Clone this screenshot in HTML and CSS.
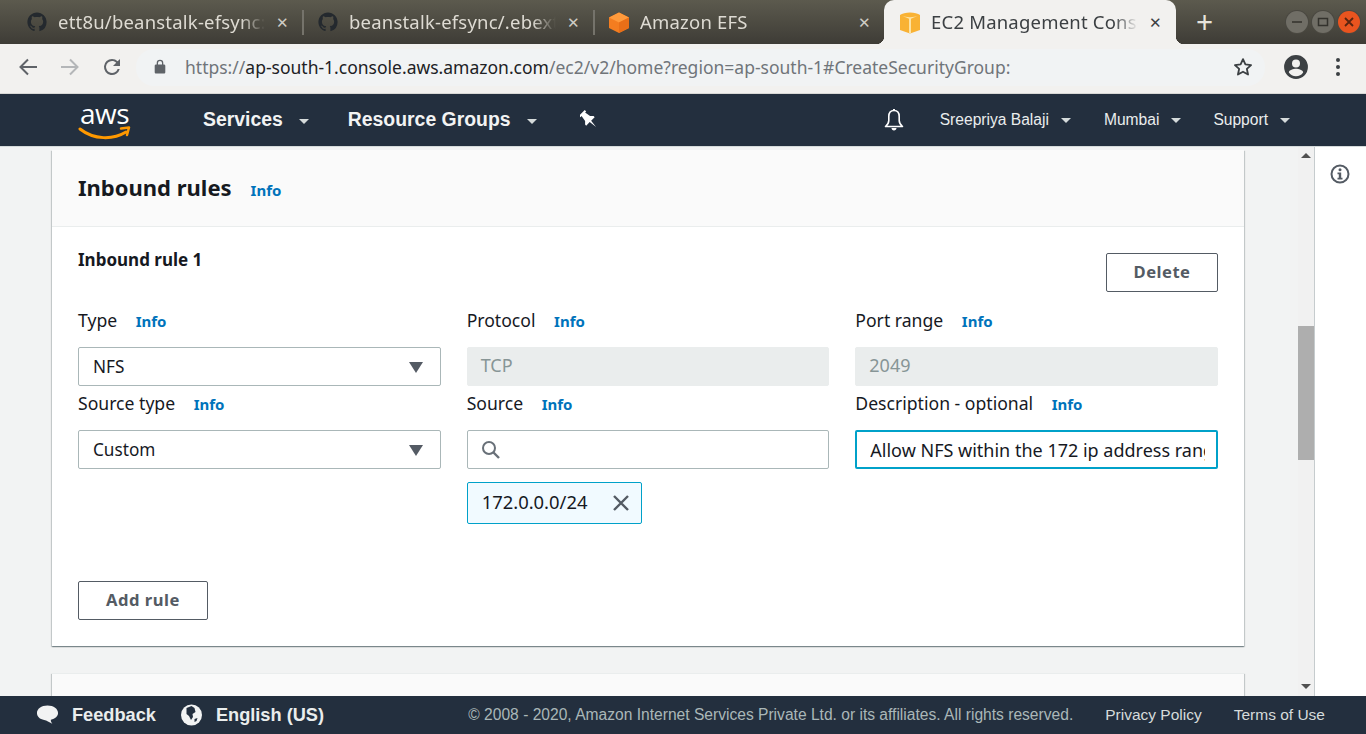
FILE: index.html
```html
<!DOCTYPE html>
<html lang="en">
<head>
  <meta charset="UTF-8">
  <title>EC2 Management Console</title>
  <link rel="stylesheet" href="styles.css">
</head>
<body>
  <div class="tabstrip">
    <div class="tab">
      <svg class="tab-icon" viewBox="-1 -2 18 20"><path fill="#24292e" d="M8 0C3.58 0 0 3.58 0 8c0 3.54 2.29 6.53 5.47 7.59.4.07.55-.17.55-.38 0-.19-.01-.82-.01-1.49-2.01.37-2.53-.49-2.69-.94-.09-.23-.48-.94-.82-1.13-.28-.15-.68-.52-.01-.53.63-.01 1.08.58 1.23.82.72 1.21 1.87.87 2.33.66.07-.52.28-.87.51-1.07-1.78-.2-3.64-.89-3.64-3.95 0-.87.31-1.59.82-2.15-.08-.2-.36-1.02.08-2.12 0 0 .67-.21 2.2.82.64-.18 1.32-.27 2-.27s1.36.09 2 .27c1.53-1.04 2.2-.82 2.2-.82.44 1.1.16 1.92.08 2.12.51.56.82 1.27.82 2.15 0 3.07-1.87 3.75-3.65 3.95.29.25.54.73.54 1.48 0 1.07-.01 1.93-.01 2.2 0 .21.15.46.55.38A8.01 8.01 0 0 0 16 8c0-4.42-3.58-8-8-8z"/></svg>
      <span class="tab-title">ett8u/beanstalk-efsync: Demo</span>
      <span class="tab-close">✕</span>
    </div>
    <div class="tab">
      <svg class="tab-icon" viewBox="-1 -2 18 20"><path fill="#24292e" d="M8 0C3.58 0 0 3.58 0 8c0 3.54 2.29 6.53 5.47 7.59.4.07.55-.17.55-.38 0-.19-.01-.82-.01-1.49-2.01.37-2.53-.49-2.69-.94-.09-.23-.48-.94-.82-1.13-.28-.15-.68-.52-.01-.53.63-.01 1.08.58 1.23.82.72 1.21 1.87.87 2.33.66.07-.52.28-.87.51-1.07-1.78-.2-3.64-.89-3.64-3.95 0-.87.31-1.59.82-2.15-.08-.2-.36-1.02.08-2.12 0 0 .67-.21 2.2.82.64-.18 1.32-.27 2-.27s1.36.09 2 .27c1.53-1.04 2.2-.82 2.2-.82.44 1.1.16 1.92.08 2.12.51.56.82 1.27.82 2.15 0 3.07-1.87 3.75-3.65 3.95.29.25.54.73.54 1.48 0 1.07-.01 1.93-.01 2.2 0 .21.15.46.55.38A8.01 8.01 0 0 0 16 8c0-4.42-3.58-8-8-8z"/></svg>
      <span class="tab-title">beanstalk-efsync/.ebextensions</span>
      <span class="tab-close">✕</span>
    </div>
    <div class="tab tab-last">
      <svg class="tab-icon" viewBox="0 0 22 24"><path fill="#f47d20" d="M11 2.500l10 5v10.500l-10 5-10-5V7.500z"/><path fill="#ff9a3c" d="M11 2.500l10 5-10 5-10-5z"/><path fill="#e96f18" d="M11 12.500l10-5V18l-10 5z"/></svg>
      <span class="tab-title">Amazon EFS</span>
      <span class="tab-close">✕</span>
    </div>
    <div class="tab tab-active">
      <svg class="tab-icon" viewBox="0 0 22 24"><path fill="#f9b234" d="M1 5C5 1.500 17 1.500 21 5v15l-10 3.500L1 20z"/><path fill="#fde3a4" d="M3 5.800c4 1.800 12 1.800 16 0l-7 3V23.200h-2V8.800z"/></svg>
      <span class="tab-title">EC2 Management Console</span>
      <span class="tab-close">✕</span>
    </div>
    <span class="new-tab">+</span>
    <div class="window-btns">
      <span class="win-btn"><svg viewBox="0 0 22 22"><path stroke="#33322d" stroke-width="1.500" d="M6 11h10"/></svg></span>
      <span class="win-btn"><svg viewBox="0 0 22 22"><path fill="none" stroke="#33322d" stroke-width="1.500" d="M6.500 7.500h9v7h-9z"/></svg></span>
      <span class="win-btn win-close"><svg viewBox="0 0 22 22"><path fill="none" stroke="#5a2410" stroke-width="1.800" d="M7 7l8 8M15 7l-8 8"/></svg></span>
    </div>
  </div>

  <div class="toolbar">
    <svg class="tool-icon" viewBox="0 0 24 24"><path fill="none" stroke="#5f6368" stroke-width="2" d="M21 12H5M12 4.500L4.500 12l7.500 7.500"/></svg>
    <svg class="tool-icon" viewBox="0 0 24 24"><path fill="none" stroke="#b4b6b8" stroke-width="2" d="M3 12h16M12 4.500l7.500 7.500-7.500 7.500"/></svg>
    <svg class="tool-icon" viewBox="0 0 24 24"><path fill="#5f6368" d="M17.650 6.350A7.960 7.960 0 0 0 12 4a8 8 0 1 0 7.730 10h-2.080A6 6 0 1 1 12 6c1.660 0 3.140.69 4.220 1.780L13 11h7V4z"/></svg>
    <div class="omnibox">
      <svg class="lock" viewBox="0 0 12 16"><path fill="#5f6368" d="M10 5.500H9.300V4a3.300 3.300 0 0 0-6.600 0v1.500H2c-.7 0-1.300.6-1.300 1.300v6.400c0 .7.6 1.300 1.300 1.300h8c.7 0 1.300-.6 1.300-1.300V6.800c0-.7-.6-1.300-1.300-1.300zM4 4a2 2 0 0 1 4 0v1.500H4z"/></svg>
      <span class="url">https://<b>ap-south-1.console.aws.amazon.com</b>/ec2/v2/home?region=ap-south-1#CreateSecurityGroup:</span>
      <svg class="star" viewBox="0 0 24 24"><path fill="none" stroke="#3c4043" stroke-width="2" stroke-linejoin="round" d="M12 3.500l2.600 5.700 6.200.7-4.600 4.200 1.300 6.100-5.500-3.100-5.500 3.100 1.300-6.100-4.600-4.200 6.200-.7z"/></svg>
    </div>
    <svg class="avatar" viewBox="0 0 24 24"><path fill="#3c4043" d="M12 1a11 11 0 1 0 0 22 11 11 0 0 0 0-22zm0 4a3.700 3.700 0 1 1 0 7.400A3.700 3.700 0 0 1 12 5zm0 15.500c-2.800 0-5.200-1.400-6.600-3.500 0-2.200 4.400-3.400 6.600-3.400s6.600 1.200 6.600 3.400a8 8 0 0 1-6.600 3.500z"/></svg>
    <div class="kebab"><i></i><i></i><i></i></div>
  </div>

  <nav class="navbar">
    <div class="aws-logo">
      <span class="aws-word">aws</span>
      <svg class="aws-smile" viewBox="0 0 54 14"><path fill="none" stroke="#f90" stroke-width="3" stroke-linecap="round" d="M2 3c14 11 33 11 46 3"/><path fill="none" stroke="#f90" stroke-width="2.500" stroke-linecap="round" stroke-linejoin="round" d="M43 2.500l8-1-2 7.500"/></svg>
    </div>
    <span class="nav-main">Services<i class="caret"></i></span>
    <span class="nav-main">Resource Groups<i class="caret"></i></span>
    <svg class="pin" viewBox="0 0 18 20"><g transform="rotate(-45 9 10) translate(3 0)"><path fill="#fff" d="M2 0h8v2H8.500l1 6 2.500 2.500V12H7l-1 8-1-8H0v-1.500L2.500 8l1-6H2z"/></g></svg>
    <svg class="bell" viewBox="0 0 22 24"><path fill="none" stroke="#fff" stroke-width="1.600" stroke-linejoin="round" d="M11 2.500c-3.500 0-5.200 2.800-5.200 6v4c0 2.500-1.500 4.500-3.300 6h17c-1.800-1.500-3.300-3.500-3.300-6v-4c0-3.200-1.700-6-5.200-6z"/><path fill="#fff" d="M8.500 20h5c0 1.400-1.100 2.400-2.500 2.400S8.500 21.400 8.500 20zM10 1h2v2h-2z"/></svg>
    <span class="nav-sub nav-user">Sreepriya Balaji<i class="caret"></i></span>
    <span class="nav-sub">Mumbai<i class="caret"></i></span>
    <span class="nav-sub nav-last">Support<i class="caret"></i></span>
  </nav>

  <div class="workspace">
    <main class="content">
      <section class="card">
        <header class="card-head">
          <h2>Inbound rules</h2>
          <a class="info">Info</a>
        </header>
        <div class="card-body">
          <div class="rule-head">
            <h3>Inbound rule 1</h3>
            <button class="btn btn-delete">Delete</button>
          </div>
          <div class="rule-grid">
            <div class="field">
              <div class="field-label">Type <a class="info">Info</a></div>
              <div class="select">NFS<i class="select-arrow"></i></div>
            </div>
            <div class="field">
              <div class="field-label">Protocol <a class="info">Info</a></div>
              <div class="readonly">TCP</div>
            </div>
            <div class="field">
              <div class="field-label">Port range <a class="info">Info</a></div>
              <div class="readonly">2049</div>
            </div>
            <div class="field">
              <div class="field-label">Source type <a class="info">Info</a></div>
              <div class="select">Custom<i class="select-arrow"></i></div>
            </div>
            <div class="field">
              <div class="field-label">Source <a class="info">Info</a></div>
              <div class="search">
                <svg class="search-icon" viewBox="0 0 20 20"><circle cx="8" cy="8" r="6" fill="none" stroke="#687078" stroke-width="2"/><path stroke="#687078" stroke-width="2.400" d="M12.500 12.500l5.500 5.500"/></svg>
              </div>
              <div class="token"><span class="token-text">172.0.0.0/24</span>
                <svg class="token-x" viewBox="0 0 18 18"><path stroke="#545b64" stroke-width="2.400" fill="none" d="M2 2l14 14M16 2L2 16"/></svg>
              </div>
            </div>
            <div class="field">
              <div class="field-label">Description - optional <a class="info">Info</a></div>
              <input class="text-input" type="text" value="Allow NFS within the 172 ip address range" readonly>
            </div>
          </div>
          <button class="btn btn-add">Add rule</button>
        </div>
      </section>
      <section class="card card-next">
        <div class="card-head card-head-next"></div>
      </section>
    </main>
    <div class="scrollbar">
      <i class="arrow-up"></i>
      <div class="thumb"></div>
      <i class="arrow-down"></i>
    </div>
    <aside class="sidebar">
      <svg class="side-info" viewBox="0 0 20 20"><circle cx="10" cy="10" r="8.500" fill="none" stroke="#545b64" stroke-width="2"/><circle cx="10" cy="5.800" r="1.500" fill="#545b64"/><path fill="#545b64" d="M7.500 8.500h3.700v5.300h1.300v1.700h-5v-1.700h1.300v-3.600H7.500z"/></svg>
    </aside>
  </div>

  <footer class="footer">
    <svg class="foot-icon" viewBox="0 0 24 22"><path fill="#f2f3f3" d="M12 1C5.500 1 1 4.500 1 9c0 3.800 3 6.500 7.500 7.300 2.800.5 5 2.500 8.500 3.700-1.300-1.500-1.700-2.900-1.500-4C20 15 23 12.500 23 9c0-4.500-4.500-8-11-8z"/></svg>
    <span class="foot-strong">Feedback</span>
    <svg class="foot-icon foot-globe" viewBox="0 0 22 22"><circle cx="11" cy="11" r="10.500" fill="#f2f3f3"/><path fill="#232f3e" d="M6 4l5-2 3 2 1 4-3 2 .5 3-2 3-2-4-2.500-2zM14 15l3-1-1 3-2 1z"/></svg>
    <span class="foot-strong">English (US)</span>
    <span class="copyright">© 2008 - 2020, Amazon Internet Services Private Ltd. or its affiliates. All rights reserved.</span>
    <a class="foot-link">Privacy Policy</a>
    <a class="foot-link">Terms of Use</a>
  </footer>
</body>
</html>
```

FILE: styles.css
```css
* {
  box-sizing: border-box;
}
html, body {
  height: 100%;
}
body {
  margin: 0;
  display: flex;
  flex-direction: column;
  overflow: hidden;
  font-family: "Noto Sans", sans-serif;
  color: #16191f;
  background: #f2f3f3;
}

/* browser tabs */
.tabstrip {
  height: 44px;
  flex: none;
  display: flex;
  align-items: center;
  padding-left: 12px;
  color: #dedbd3;
  background: linear-gradient(#5c5a4e, #3e3c36);
}
.tab {
  width: 291px;
  height: 44px;
  flex: none;
  display: flex;
  align-items: center;
  gap: 10px;
  padding: 0 14px;
  position: relative;
}
.tab::after {
  content: "";
  position: absolute;
  right: -1px;
  top: 10px;
  width: 2px;
  height: 25px;
  background: #75736b;
}
.tab-last::after {
  display: none;
}
.tab-icon {
  width: 22px;
  height: 24px;
  flex: none;
}
.tab-title {
  flex: 1;
  min-width: 0;
  overflow: hidden;
  white-space: nowrap;
  font-size: 18.500px;
  letter-spacing: .2px;
  padding-bottom: 2px;
  -webkit-mask-image: linear-gradient(to left, transparent, #000 24px);
  mask-image: linear-gradient(to left, transparent, #000 24px);
}
.tab-close {
  font-size: 15px;
  width: 14px;
  text-align: center;
  color: #cfccc5;
}
.tab-active {
  color: #3c4043;
  background: #f2f1ef;
  border-radius: 10px 10px 0 0;
  width: 292px;
  margin-left: -1px;
  padding-left: 15px;
}
.tab-active::before, .tab-active::after {
  content: "";
  position: absolute;
  bottom: 0;
  top: auto;
  width: 8px;
  height: 8px;
  background: radial-gradient(circle at 0 0, transparent 8px, #f2f1ef 8.500px);
}
.tab-active::before {
  left: -8px;
}
.tab-active::after {
  right: -8px;
  background: radial-gradient(circle at 100% 0, transparent 8px, #f2f1ef 8.500px);
}
.tab-active .tab-close {
  color: #3c4043;
}
.new-tab {
  margin-left: 20px;
  font-size: 30px;
  line-height: 1;
  color: #e6e3dc;
}
.window-btns {
  margin-left: auto;
  margin-right: 6px;
  display: flex;
  gap: 4px;
}
.win-btn {
  width: 22px;
  height: 22px;
  border-radius: 50%;
  background: #706e66;
  box-shadow: 0 0 0 1px #4a4841;
}
.win-btn svg {
  display: block;
}
.win-close {
  background: #e9541f;
}

/* address bar */
.toolbar {
  height: 50px;
  flex: none;
  display: flex;
  align-items: center;
  background: #f2f1ef;
  border-bottom: 1px solid #d8d8d6;
  padding: 0 0 3px 16px;
}
.tool-icon {
  width: 24px;
  height: 24px;
  flex: none;
  margin-right: 18px;
}
.omnibox {
  width: 1129px;
  height: 37px;
  margin-left: -6px;
  flex: none;
  display: flex;
  align-items: center;
  background: #f1f3f4;
  border-radius: 18px;
  padding-left: 18px;
}
.lock {
  width: 12px;
  height: 16px;
  flex: none;
}
.url {
  margin-left: 19px;
  font-size: 17.500px;
  white-space: nowrap;
  color: #70757a;
}
.url b {
  font-weight: 400;
  color: #202124;
}
.star {
  width: 22px;
  height: 22px;
  margin-left: auto;
  margin-right: 11px;
}
.avatar {
  width: 26px;
  height: 26px;
  margin-left: 18px;
}
.kebab {
  margin-left: 27px;
  display: flex;
  flex-direction: column;
  gap: 3px;
}
.kebab i {
  width: 4px;
  height: 4px;
  border-radius: 50%;
  background: #3c4043;
}

/* console nav */
.navbar {
  height: 53px;
  flex: none;
  display: flex;
  align-items: center;
  color: #fff;
  background: #232f3e;
  font-family: "Liberation Sans", sans-serif;
  border-bottom: 1px solid #d5dbdb;
}
.aws-logo {
  width: 54px;
  margin-left: 78px;
  position: relative;
  height: 36px;
}
.aws-word {
  display: block;
  font-family: "Open Sans", sans-serif;
  font-size: 28px;
  line-height: 28px;
  letter-spacing: -0.5px;
  margin-top: -3px;
  margin-left: -1px;
  text-align: center;
}
.aws-smile {
  position: absolute;
  left: 0;
  top: 24px;
  width: 54px;
  height: 14px;
}
.nav-main {
  margin-left: 71px;
  padding-bottom: 2px;
  font-size: 19.400px;
  font-weight: 700;
  color: #f2f3f3;
  white-space: nowrap;
}
.nav-main + .nav-main {
  margin-left: 39px;
}
.caret {
  display: inline-block;
  margin-left: 16px;
  vertical-align: 2px;
  border: 5px solid transparent;
  border-top: 5px solid #d5dbdb;
  border-bottom: 0;
}
.pin {
  width: 18px;
  height: 20px;
  margin-left: 43px;
}
.bell {
  width: 22px;
  height: 24px;
  margin-left: auto;
}
.nav-sub {
  font-size: 15.600px;
  color: #eaeded;
  white-space: nowrap;
  margin-left: 33px;
}
.nav-sub .caret {
  margin-left: 12px;
}
.nav-user {
  margin-left: 35px;
}
.nav-last {
  margin-left: 32px;
  margin-right: 76px;
}

/* main area */
.workspace {
  flex: 1;
  min-height: 0;
  display: flex;
}
.content {
  flex: 1;
  min-width: 0;
  overflow: hidden;
  padding: 3px 54px 0 52px;
}
.card {
  background: #fff;
  box-shadow: 0 1px 1px 0 rgba(0, 28, 36, .3), 1px 1px 1px 0 rgba(0, 28, 36, .15), -1px 1px 1px 0 rgba(0, 28, 36, .15);
}
.card-head {
  height: 77px;
  display: flex;
  align-items: center;
  gap: 19px;
  padding: 0 0 2px 26px;
  background: #fafafa;
  border-bottom: 1px solid #eaeded;
}
.card-head h2 {
  margin: 0;
  font-size: 22px;
  font-weight: 700;
}
.card-head .info {
  margin-top: 5px;
}
.card-body {
  padding: 26px;
}
.card-next {
  margin-top: 27px;
  height: 60px;
}
.card-head-next {
  border-top: 1px solid #eaeded;
}
.info {
  font-size: 15px;
  font-weight: 700;
  color: #0073bb;
}
.rule-head {
  display: flex;
  justify-content: space-between;
  align-items: flex-start;
}
.rule-head h3 {
  margin: 0;
  font-size: 17px;
  line-height: 14px;
  font-weight: 700;
}
.btn {
  height: 39px;
  padding-bottom: 3px;
  font-family: "Noto Sans", sans-serif;
  font-size: 16.600px;
  font-weight: 700;
  letter-spacing: .5px;
  color: #545b64;
  background: #fff;
  border: 1px solid #545b64;
  border-radius: 2px;
}
.btn-delete {
  width: 112px;
}
.btn-add {
  width: 130px;
  margin-top: 57px;
  display: block;
}
.rule-grid {
  display: grid;
  grid-template-columns: repeat(3, 1fr);
  column-gap: 26px;
  row-gap: 6px;
  margin-top: 17px;
}
.field-label {
  height: 24px;
  line-height: 22px;
  margin-bottom: 14px;
  font-size: 17.600px;
  white-space: nowrap;
}
.field-label .info {
  margin-left: 14px;
}
.select, .readonly, .search, .text-input {
  height: 39px;
  line-height: 37px;
  padding: 0 13px;
  font-family: "Noto Sans", sans-serif;
  font-size: 17.200px;
  border: 1px solid #aab7b8;
  border-radius: 2px;
  background: #fff;
}
.select {
  position: relative;
  padding-left: 14px;
}
.select-arrow {
  position: absolute;
  right: 17px;
  top: 14px;
  border: 7px solid transparent;
  border-top: 11px solid #545b64;
  border-bottom: 0;
}
.readonly {
  font-size: 18px;
  line-height: 35px;
  color: #879596;
  background: #eaeded;
  border-color: #eaeded;
}
.search {
  display: flex;
  align-items: center;
}
.search-icon {
  width: 20px;
  height: 20px;
}
.text-input {
  display: block;
  width: 100%;
  font-size: 18px;
  color: #16191f;
  border: 2px solid #00a1c9;
  padding: 0 11px 0 13px;
  outline: none;
}
.token {
  width: 175px;
  height: 42px;
  margin-top: 13px;
  display: flex;
  align-items: center;
  justify-content: space-between;
  padding: 0 11px 0 14px;
  font-size: 18.400px;
  background: #f1faff;
  border: 1px solid #00a1c9;
  border-radius: 2px;
}
.token-text {
  padding-bottom: 4px;
}
.token-x {
  width: 18px;
  height: 18px;
}

/* scrollbar + help panel */
.scrollbar {
  width: 16px;
  flex: none;
  position: relative;
  background: #f1f1f1;
}
.thumb {
  position: absolute;
  left: 0;
  right: 0;
  top: 179px;
  height: 134px;
  background: #aeaeae;
}
.arrow-up, .arrow-down {
  position: absolute;
  left: 3px;
  border: 5px solid transparent;
}
.arrow-up {
  top: 6px;
  border-top: 0;
  border-bottom: 5px solid #505050;
}
.arrow-down {
  bottom: 7px;
  border-bottom: 0;
  border-top: 5px solid #505050;
}
.sidebar {
  width: 52px;
  flex: none;
  display: flex;
  justify-content: center;
  background: #fff;
  border-left: 1px solid #c6ccce;
  padding-top: 17px;
}
.side-info {
  width: 20px;
  height: 20px;
  margin-left: -2px;
}

/* footer */
.footer {
  height: 38px;
  flex: none;
  display: flex;
  align-items: center;
  padding-left: 36px;
  color: #d5dbdb;
  background: #232f3e;
  font-family: "Liberation Sans", sans-serif;
  font-size: 15.500px;
}
.foot-icon {
  width: 23px;
  height: 22px;
  flex: none;
}
.foot-globe {
  margin-left: 24px;
}
.foot-strong {
  margin-left: 13px;
  font-size: 18.200px;
  font-weight: 700;
  color: #eaeded;
}
.copyright {
  margin-left: auto;
  font-size: 15.600px;
  color: #aab7b8;
}
.foot-link {
  margin-left: 32px;
  color: #d5dbdb;
}
.foot-link:last-child {
  margin-right: 41px;
}
```
